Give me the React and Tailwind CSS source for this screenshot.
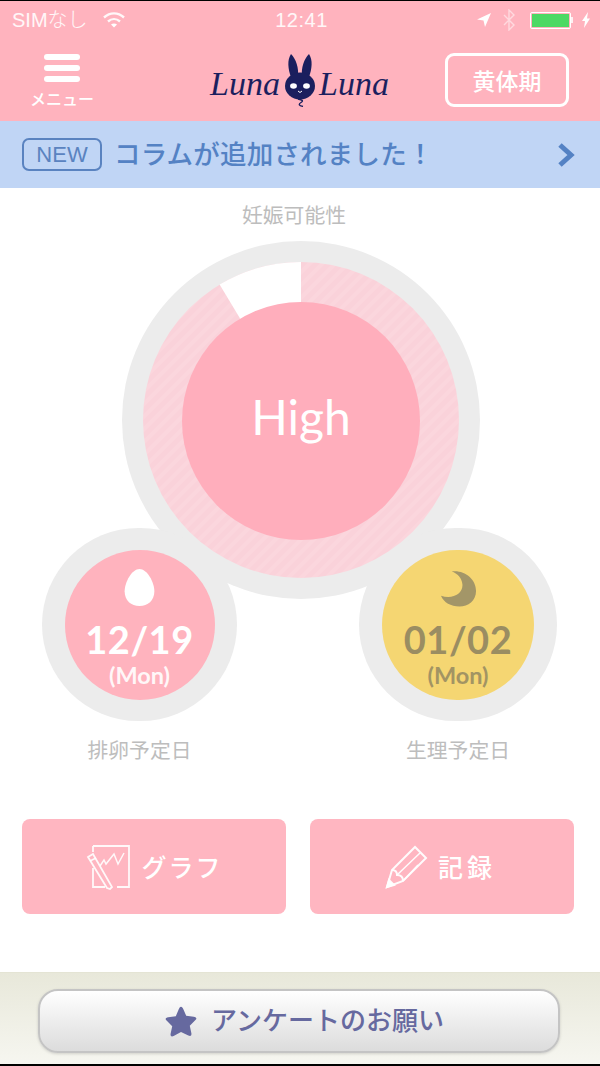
import React from 'react';

const JP = 'font-["Noto_Sans_CJK_JP","Noto_Sans",sans-serif]';

function Wifi() {
  return (
    <svg width="24" height="18" viewBox="0 0 24 18" fill="none" stroke="#fff" strokeWidth="2.4" strokeOpacity="0.9">
      <path d="M2 6.5C8 1 16 1 22 6.5" />
      <path d="M6 10.5c3.6-3.2 8.4-3.2 12 0" />
      <path d="M12 16.5l-3-3c1.800-1.400 4.200-1.400 6 0z" fill="#fff" stroke="none" />
    </svg>
  );
}

function StatusBar() {
  return (
    <div className="h-[38px] flex items-center pl-[12px] pr-[9px] text-white/90 font-['Liberation_Sans','Noto_Sans_CJK_JP',sans-serif]">
      <div className="flex-1 flex items-center gap-[14px]">
        <span className="text-[20px] font-light">SIMなし</span>
        <Wifi />
      </div>
      <span className="text-[20px] tracking-[0.5px]">12:41</span>
      <div className="flex-1 flex items-center justify-end">
        <svg width="16" height="16" viewBox="0 0 16 16" className="mr-[11px]"><path d="M15 1L1 7.500l6.500 1L9 15z" fill="#fff" /></svg>
        <svg width="12" height="22" viewBox="0 0 12 22" fill="none" stroke="#fff" strokeOpacity="0.5" strokeWidth="1.400" className="mr-[15px]"><path d="M1 6l10 10-5 5V1l5 5L1 16" /></svg>
        <div className="w-[41px] h-[17px] rounded-[2px] border border-white p-[1px]">
          <div className="w-full h-full bg-[#4cd964]" />
        </div>
        <div className="w-[2px] h-[6px] bg-white/80 mr-[8px]" />
        <svg width="10" height="16" viewBox="0 0 10 16"><path d="M7 0L1 9h3l-1 7 6-9.500H6z" fill="#fff" /></svg>
      </div>
    </div>
  );
}

function Rabbit() {
  return (
    <svg width="32" height="54" viewBox="0 0 32 54">
      <path d="M7 1C3 7 4 16 7 24h7C15 15 12 6 7 1zM25 1c4 6 3 15 0 23h-7c-1-9 2-18 7-23z" fill="#1b1f5e" />
      <ellipse cx="16" cy="33" rx="15" ry="13.500" fill="#1b1f5e" />
      <ellipse cx="9.500" cy="33" rx="3.400" ry="2.800" fill="#fff" />
      <ellipse cx="22.500" cy="33" rx="3.400" ry="2.800" fill="#fff" />
      <path d="M14 38l2 1.500 2-1.500" stroke="#fff" strokeWidth="1" fill="none" />
      <path d="M14 46c4 1 6 1.500 3 3.500s-2 3 2 4" stroke="#1b1f5e" strokeWidth="1.300" fill="none" />
    </svg>
  );
}

function Logo() {
  return (
    <div className="flex items-center text-[#1b1f5e] font-['Liberation_Serif',serif] italic text-[34px] leading-none">
      <span className="w-[74px] pt-[8px]">Luna</span>
      <Rabbit />
      <span className="w-[74px] pt-[8px] pl-[3px]">Luna</span>
    </div>
  );
}

function Header() {
  return (
    <div className="bg-[#ffb3be] h-[120px] flex flex-col shrink-0">
      <StatusBar />
      <div className="flex items-start justify-between pl-[31px] pr-[31px]">
        <div className="w-[124px]">
          <div className={`w-[62px] flex flex-col items-center pt-[15px] ${JP}`}>
            <div className="w-[36px] flex flex-col gap-[5px]">
              <div className="h-[6px] rounded-full bg-white" />
              <div className="h-[6px] rounded-full bg-white" />
              <div className="h-[6px] rounded-full bg-white" />
            </div>
            <span className="text-white text-[16px] font-medium leading-none mt-[8px] whitespace-nowrap">メニュー</span>
          </div>
        </div>
        <div className="pt-[14px]"><Logo /></div>
        <div className={`w-[124px] h-[54px] mt-[14px] border-[3px] border-white rounded-[9px] flex items-center justify-center text-white text-[23px] font-medium ${JP}`}>
          黄体期
        </div>
      </div>
    </div>
  );
}

function Banner() {
  return (
    <div className={`h-[67px] bg-[#c0d5f5] flex items-center pl-[22px] pr-[24px] shrink-0 ${JP}`}>
      <div className="w-[80px] h-[33px] rounded-[7px] border-2 border-[#5a83c0] text-[#5a83c0] text-[22px] leading-none flex items-center justify-center font-['Liberation_Sans',sans-serif]">NEW</div>
      <span className="ml-[12px] pb-[3px] flex-1 text-[#5482c4] text-[26.500px] font-medium leading-none tracking-[0.2px]">コラムが追加されました！</span>
      <svg width="20" height="26" viewBox="0 0 20 26" fill="none" stroke="#5482c4" strokeWidth="5"><path d="M4 3l11 10L4 23" /></svg>
    </div>
  );
}

function HatchedRing() {
  const r = 158;
  const a = (-31 * Math.PI) / 180;
  const x = 158 + r * Math.sin(a);
  const y = 158 - r * Math.cos(a);
  return (
    <svg width="316" height="316" viewBox="0 0 316 316">
      <defs>
        <pattern id="hatch" width="9" height="9" patternUnits="userSpaceOnUse" patternTransform="rotate(45)">
          <rect width="9" height="9" fill="#fad2da" />
          <rect width="4" height="9" fill="#fbd6dd" />
        </pattern>
      </defs>
      <circle cx="158" cy="158" r={r} fill="url(#hatch)" />
      <path d={`M158 158L${x} ${y}A${r} ${r} 0 0 1 158 0Z`} fill="#fff" />
    </svg>
  );
}

function MainGauge() {
  return (
    <div className="relative w-[358px] h-[358px] ml-[122px] rounded-full bg-[#ececec] flex items-center justify-center">
      <HatchedRing />
      <div className="absolute left-[60px] top-[61px] w-[238px] h-[238px] rounded-full bg-[#ffaebc] flex items-center justify-center pb-[8px] text-white text-[48px] leading-none font-['Lato',sans-serif]">
        High
      </div>
    </div>
  );
}

function DateCircle({ icon, date, outer, inner, tone, text, label }) {
  return (
    <div className="flex flex-col items-center">
      <div className={`${outer} h-[193px] rounded-full bg-[#ececec] flex items-center justify-center`}>
        <div className={`${inner} h-[150px] rounded-full flex flex-col items-center font-['Lato',sans-serif] ${tone} ${text}`}>
          <div className="h-[40px] mt-[18px] flex items-start">{icon}</div>
          <span className="text-[38px] font-bold leading-none mt-[12px] tracking-[0.5px]">{date}</span>
          <span className="text-[23.500px] font-bold leading-none mt-[6px] opacity-90">(Mon)</span>
        </div>
      </div>
      <span className={`mt-[15px] text-[20.800px] leading-[26px] text-[#bdbdbd] ${JP}`}>{label}</span>
    </div>
  );
}

function Egg() {
  return (
    <svg width="33" height="39" viewBox="0 0 34 42"><path d="M17 1C25 1 33 15 33 25 33 35 26 41 17 41 8 41 1 35 1 25 1 15 9 1 17 1z" fill="#fff" /></svg>
  );
}

function Moon() {
  return (
    <svg width="37" height="38" viewBox="0 0 38 38" className="mt-[2px]"><path d="M12 1C24 -1 37 8 37 21 37 31 29 37 20 37 11 37 4 33 1 26 13 30 24 24 23 14 22.500 8 18 3 12 1z" fill="#a39668" /></svg>
  );
}

function GraphIcon() {
  return (
    <svg width="46" height="46" viewBox="0 0 46 46" fill="none" stroke="#fff" strokeWidth="1.800" strokeOpacity="0.9">
      <path d="M8 2H44V43H32M8 8V2M8 24V43H20" />
      <path d="M13 18l4-6 2 4 8-10 4 10 6-11" strokeWidth="1.500" transform="translate(2 4)" />
      <path d="M3 13l5-3 19 33-2 2-3-1z" fill="#ffb6c1" />
      <path d="M5 17l6-3" />
    </svg>
  );
}

function PencilIcon() {
  return (
    <svg width="44" height="44" viewBox="0 0 44 44" fill="none" stroke="#fff" strokeWidth="2" strokeOpacity="0.95">
      <path d="M3 42L8 25 31 2l11 11-23 23z" />
      <path d="M8 25c3 0 5 1 5 5 4 0 6 2 6 6" />
      <path d="M13 30L36 8M19 36L34 20" strokeWidth="1.500" />
      <path d="M3 42l2-7 5 5z" fill="#fff" />
    </svg>
  );
}

function ActionButton({ icon, label, extra }) {
  return (
    <div className={`w-[264px] h-[95px] rounded-[8px] bg-[#ffb6c1] flex items-center justify-center text-white text-[25px] font-medium ${JP} ${extra}`}>
      {icon}
      <span className="ml-[10px]">{label}</span>
    </div>
  );
}

function Footer() {
  return (
    <div className="mt-auto h-[92px] border-t border-[#e4e4d4] bg-gradient-to-b from-[#e8e8da] to-[#f6f6f0] flex justify-center pt-[16px] pr-[2px] shrink-0">
      <div className="w-[522px] h-[64px] rounded-[20px] border-[2px] border-[#c4c4c4] bg-gradient-to-b from-[#ffffff] to-[#dcdcdc] shadow-[0_1px_3px_rgba(0,0,0,0.15)] flex items-center justify-center gap-[13px] pl-[10px]">
        <svg width="34" height="33" viewBox="0 0 36 34"><path d="M18 1.500c1 0 1.800 1 2.500 2.500l3 7 8 1c3 .4 3.500 2 1.800 3.500l-6 6 1.700 8c.4 2.500-1 3.500-3.200 2.300L18 28l-7.800 4.300C8 33.500 6.600 32.500 7 30l1.700-8-6-6C1 14.400 1.500 12.800 4.500 12.400l8-1 3-7c.7-1.500 1.500-2.900 2.500-2.900z" fill="#66699f" /></svg>
        <span className={`pb-[4px] text-[#66699f] text-[26px] font-medium leading-none ${JP}`}>アンケートのお願い</span>
      </div>
    </div>
  );
}

export default function App() {
  return (
    <div className="w-[600px] h-[1066px] bg-white flex flex-col overflow-hidden">
      <div className="h-[1px] bg-black shrink-0" />
      <Header />
      <Banner />
      <div className={`mt-[13px] w-[600px] pr-[12px] text-center text-[20.800px] leading-[26px] text-[#bdbdbd] ${JP}`}>妊娠可能性</div>
      <div className="mt-[14px]"><MainGauge /></div>
      <div className="-mt-[71px] pl-[42px] pr-[43px] flex justify-between relative">
        <DateCircle icon={<Egg />} date="12/19" outer="w-[195px]" inner="w-[150px]" tone="bg-[#ffb3be]" text="text-white" label="排卵予定日" />
        <DateCircle icon={<Moon />} date="01/02" outer="w-[198px]" inner="w-[152px]" tone="bg-[#f5d672]" text="text-[#9a8d62]" label="生理予定日" />
      </div>
      <div className="mt-[57px] pl-[22px] pr-[26px] flex justify-between">
        <ActionButton icon={<GraphIcon />} label="グラフ" extra="tracking-[2px]" />
        <ActionButton icon={<PencilIcon />} label="記録" extra="tracking-[4px] pr-[4px]" />
      </div>
      <Footer />
      <div className="h-[2px] bg-black shrink-0" />
    </div>
  );
}
